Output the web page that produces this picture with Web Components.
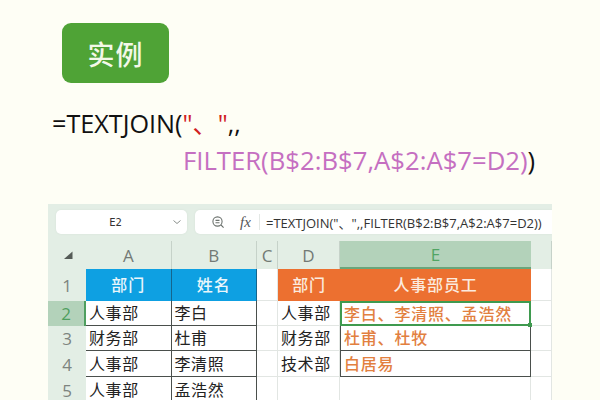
<!DOCTYPE html>
<html>
<head>
<meta charset="utf-8">
<style>
  html, body { margin: 0; width: 600px; height: 400px; overflow: hidden; background: #fefef5; }
  body { font-family: "Open Sans", "Noto Sans CJK SC", sans-serif; display: flex; flex-direction: column; }
</style>
</head>
<body>
<tag-badge>实例</tag-badge>
<formula-block></formula-block>
<sheet-window></sheet-window>

<script>
const CJK = '"Noto Sans CJK SC", sans-serif';

class TagBadge extends HTMLElement {
  constructor() {
    super();
    this.attachShadow({ mode: "open" });
    this.shadowRoot.innerHTML = `
      <style>
        :host { display: flex; width: 107px; height: 60px; margin: 23px 0 0 62px; flex: none;
          align-items: center; justify-content: center; background: #4fa336; border-radius: 9px;
          color: #f3f8e8; font: 500 27px ${CJK}; letter-spacing: 1px; }
      </style>
      <slot></slot>`;
  }
}

class FormulaBlock extends HTMLElement {
  constructor() {
    super();
    this.attachShadow({ mode: "open" });
    this.shadowRoot.innerHTML = `
      <style>
        :host { display: flex; flex-direction: column; flex: none; margin-top: 22px; padding-left: 52px;
          font: 500 25.2px "Open Sans", ${CJK}; color: #111; }
        .line { height: 37px; line-height: 37px; white-space: nowrap; }
        .second { padding-left: 131px; font-size: 25.7px; }
        .red { color: #d0201f; font-weight: 400; }
        .pink { color: #c56fc1; }
      </style>
      <div class="line">=TEXTJOIN(<span class="red">"、"</span>,,</div>
      <div class="line second"><span class="pink">FILTER(B$2:B$7,A$2:A$7=D2)</span>)</div>`;
  }
}

class NameBox extends HTMLElement {
  constructor() {
    super();
    this.attachShadow({ mode: "open" });
    this.shadowRoot.innerHTML = `
      <style>
        :host { display: flex; align-items: center; width: 131px; height: 24px; flex: none; background: #fff;
          border-radius: 5px; box-shadow: 0 0 2px #d3dfd6; font: 10.5px "DejaVu Sans Mono", monospace; color: #333; }
        span { flex: 1; text-align: center; padding-left: 3px; }
        svg { margin-right: 5px; }
      </style>
      <span>E2</span>
      <svg width="10" height="10" viewBox="0 0 10 10" fill="none" stroke="#8a908c" stroke-width="1"><path d="M1.5 3.5 5 6.5 8.5 3.5"/></svg>`;
  }
}

class FormulaBar extends HTMLElement {
  constructor() {
    super();
    this.attachShadow({ mode: "open" });
    this.shadowRoot.innerHTML = `
      <style>
        :host { display: flex; align-items: center; flex: 1; height: 24px; background: #fff;
          border-radius: 5px 0 0 5px; box-shadow: 0 0 2px #d3dfd6; color: #333; padding-left: 16px;
          font: 13px "Open Sans", ${CJK}; white-space: nowrap; overflow: hidden; }
        .fx { font: italic 15px "Liberation Serif", serif; margin-left: 15px; width: 18px; color: #555; }
        .sep { width: 1px; height: 16px; background: #e4e8e5; margin: 0 6px 0 1px; }
      </style>
      <svg width="14" height="14" viewBox="0 0 14 14" fill="none" stroke="#6c726e" stroke-width="1.1">
        <circle cx="6.5" cy="6.5" r="4.6"/><path d="M10 10l2.6 2.6M4.5 5.4h4M4.5 7.8h4"/>
      </svg>
      <span class="fx">fx</span><span class="sep"></span>
      <span>=TEXTJOIN("、",,FILTER(B$2:B$7,A$2:A$7=D2))</span>`;
  }
}

class SheetGrid extends HTMLElement {
  constructor() {
    super();
    this.attachShadow({ mode: "open" });
    const names = ["A", "B", "C", "D", "E", "F"];
    const rows = [
      ["部门", "姓名", "", "部门", "人事部员工", ""],
      ["人事部", "李白", "", "人事部", "李白、李清照、孟浩然", ""],
      ["财务部", "杜甫", "", "财务部", "杜甫、杜牧", ""],
      ["人事部", "李清照", "", "技术部", "白居易", ""],
      ["人事部", "孟浩然", "", "", "", ""],
    ];
    let html = `<div class="corner"><svg width="11" height="10" viewBox="0 0 11 10"><path d="M1 9 9.5 1.5V9z" fill="#555b57"/></svg></div>`;
    names.forEach((n) => {
      html += `<div class="col ${n === "E" ? "on" : ""}">${n === "F" ? "" : n}</div>`;
    });
    rows.forEach((row, r) => {
      html += `<div class="num ${r === 1 ? "on" : ""}">${r + 1}</div>`;
      row.forEach((text, c) => {
        let cls = "cell";
        if (c < 2) cls += r === 0 ? " blue" : " box";
        if (c === 2 || c === 5) cls += " blank";
        if (c === 3) cls += r === 0 ? " orange" : " plain";
        if (c === 4) cls += r === 0 ? " orange" : r < 4 ? " result" : " plain";
        if (c === 4 && r === 1) cls += " active";
        html += `<div class="${cls}">${text}</div>`;
      });
    });
    this.shadowRoot.innerHTML = `
      <style>
        :host { display: grid; flex: none; font: 16px ${CJK};
          grid-template-columns: 38px 85.5px 85.5px 21px 62px 191px 21px;
          grid-template-rows: 28px 32px 25px 25px 26px 26px; color: #222; }
        .corner, .col, .num { background: #e3eee5; color: #737a75; display: flex; align-items: center;
          justify-content: center; font: 17px "Open Sans", sans-serif; box-sizing: border-box; }
        .corner { padding-left: 2px; }
        .col { border-right: 1px solid #c6d2c9; }
        .col:nth-child(7) { border-right: 0; }
        .col.on { background: #b3d2ba; color: #51a564; border-right: 0; border-bottom: 2px solid #6aa57a; }
        .num { color: #7d847f; }
        .num.on { background: #b3d2ba; color: #4f9f5f; border-right: 2px solid #4f9f5f; }
        .cell { box-sizing: border-box; display: flex; align-items: center; padding: 0 0 2px 3px; white-space: nowrap;
          letter-spacing: .6px; background: #fff; border-right: 1px solid #e2e6e3; border-bottom: 1px solid #e2e6e3; }
        .blank { background: #fff; }
        .blue { background: #0ea0e2; color: #e9f6fb; justify-content: center; font-weight: 500; letter-spacing: 1px;
          border-right: 1px solid #14658d; border-bottom: 0; padding-left: 0; }
        .orange { background: #ec7030; color: #fbeadf; justify-content: center; font-weight: 500; letter-spacing: .8px;
          border: 0; padding-left: 0; }
        .box { border-right: 1.5px solid #4a4f4c; border-bottom: 1.5px solid #4a4f4c; }
        .box:nth-child(7n+2) { border-left: 1.5px solid #4a4f4c; }
        .result { color: #e2803f; font-weight: 500; letter-spacing: .8px; border: 1.5px solid #4a4f4c; border-top: 0; }
        .active { border: 2px solid #3f9a4f; position: relative; padding-left: 2px; }
        .active::after { content: ""; position: absolute; right: -3px; bottom: -3px; width: 4px; height: 4px; background: #3f9a4f; }
      </style>
      ${html}`;
  }
}

class SheetWindow extends HTMLElement {
  constructor() {
    super();
    this.attachShadow({ mode: "open" });
    this.shadowRoot.innerHTML = `
      <style>
        :host { display: flex; flex-direction: column; width: 504px; margin: 25px 0 0 48px; flex: none;
          background: #e3eee5; overflow: hidden; }
        .bar { display: flex; gap: 8px; padding: 6px 0 7px 8px; }
      </style>
      <div class="bar"><name-box></name-box><formula-bar></formula-bar></div>
      <sheet-grid></sheet-grid>`;
  }
}

customElements.define("tag-badge", TagBadge);
customElements.define("formula-block", FormulaBlock);
customElements.define("name-box", NameBox);
customElements.define("formula-bar", FormulaBar);
customElements.define("sheet-grid", SheetGrid);
customElements.define("sheet-window", SheetWindow);
</script>
</body>
</html>
